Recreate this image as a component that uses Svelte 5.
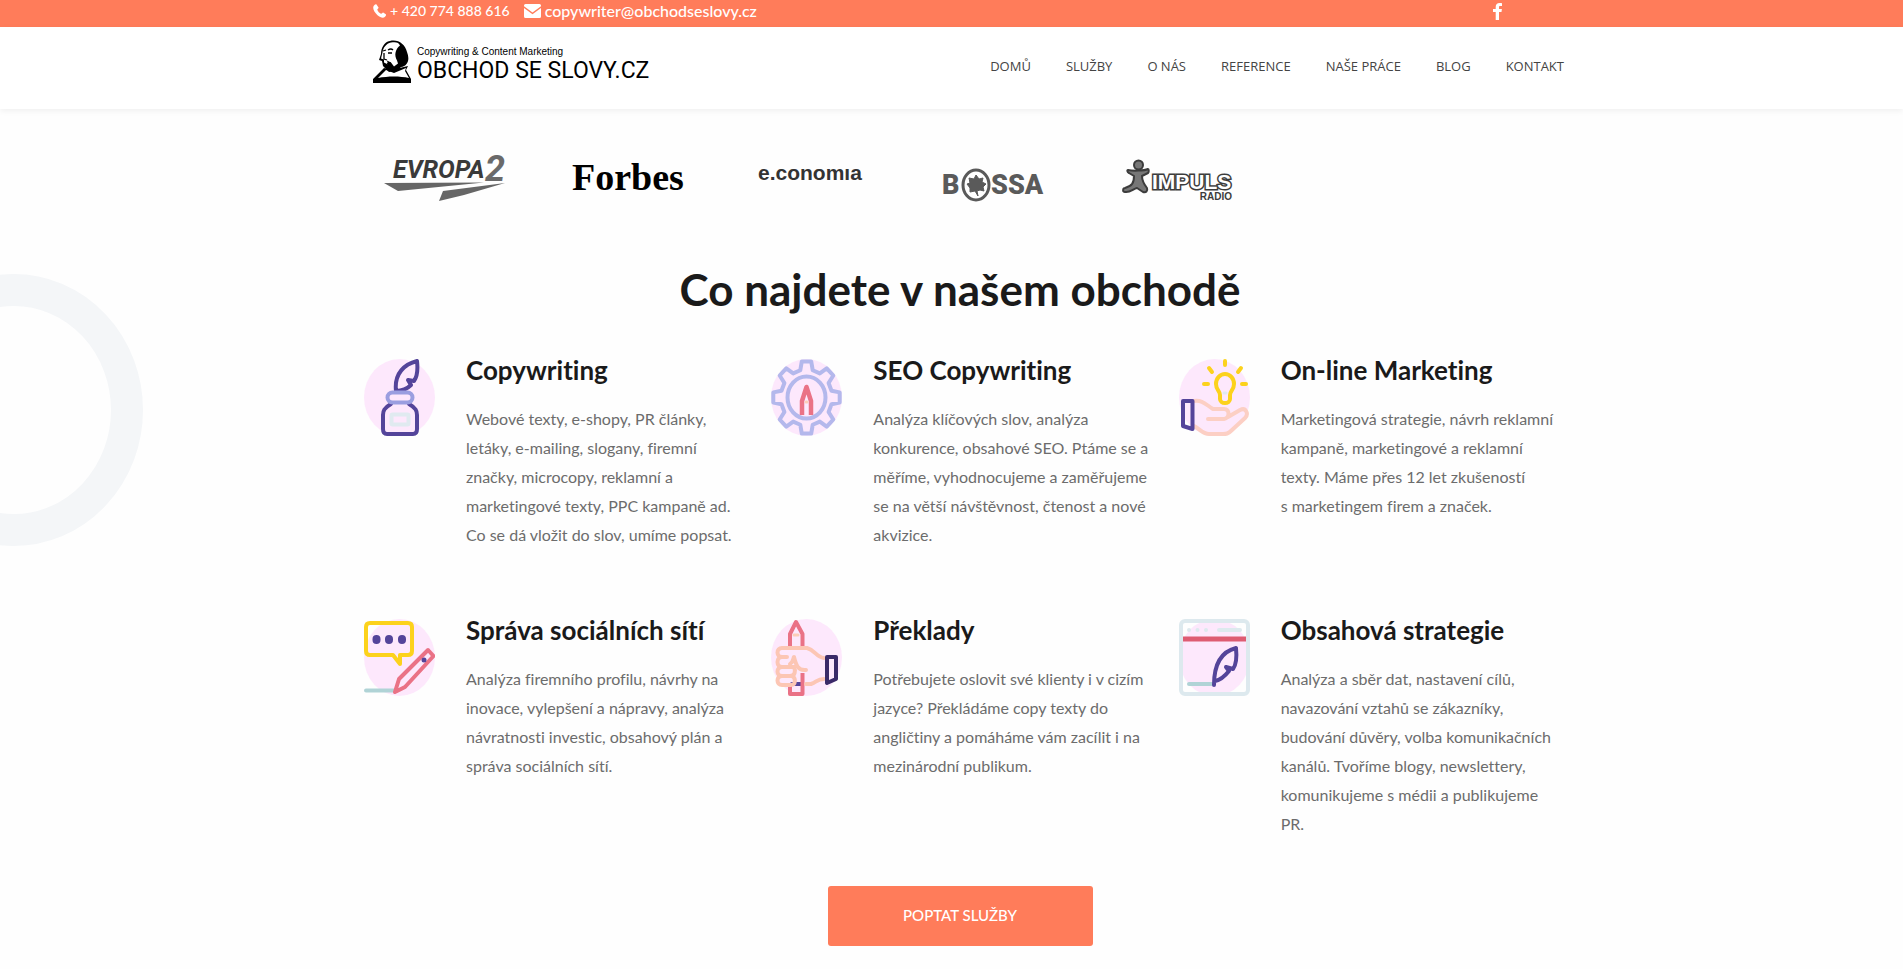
<script lang="ts">
	type IconName = 'inkwell' | 'gear' | 'idea' | 'chat' | 'fist' | 'browser';

	interface Service {
		icon: IconName;
		title: string;
		text: string;
	}

	const nav = ['Domů', 'Služby', 'O nás', 'Reference', 'Naše práce', 'Blog', 'Kontakt'];

	const services: Service[] = [
		{
			icon: 'inkwell',
			title: 'Copywriting',
			text: 'Webové texty, e-shopy, PR články,\nletáky, e-mailing, slogany, firemní\nznačky, microcopy, reklamní a\nmarketingové texty, PPC kampaně ad.\nCo se dá vložit do slov, umíme popsat.'
		},
		{
			icon: 'gear',
			title: 'SEO Copywriting',
			text: 'Analýza klíčových slov, analýza\nkonkurence, obsahové SEO. Ptáme se a\nměříme, vyhodnocujeme a zaměřujeme\nse na větší návštěvnost, čtenost a nové\nakvizice.'
		},
		{
			icon: 'idea',
			title: 'On-line Marketing',
			text: 'Marketingová strategie, návrh reklamní\nkampaně, marketingové a reklamní\ntexty. Máme přes 12 let zkušeností\ns marketingem firem a značek.'
		},
		{
			icon: 'chat',
			title: 'Správa sociálních sítí',
			text: 'Analýza firemního profilu, návrhy na\ninovace, vylepšení a nápravy, analýza\nnávratnosti investic, obsahový plán a\nspráva sociálních sítí.'
		},
		{
			icon: 'fist',
			title: 'Překlady',
			text: 'Potřebujete oslovit své klienty i v cizím\njazyce? Překládáme copy texty do\nangličtiny a pomáháme vám zacílit i na\nmezinárodní publikum.'
		},
		{
			icon: 'browser',
			title: 'Obsahová strategie',
			text: 'Analýza a sběr dat, nastavení cílů,\nnavazování vztahů se zákazníky,\nbudování důvěry, volba komunikačních\nkanálů. Tvoříme blogy, newslettery,\nkomunikujeme s médii a publikujeme\nPR.'
		}
	];

	// Eight teeth: two outer points and two root points for each
	function gearPath(cx: number, cy: number, rx: number, ry: number) {
		const points: string[] = [];
		for (let i = 0; i < 8; i++) {
			for (const [offset, r] of [[-14, 0.77], [-8, 1], [8, 1], [14, 0.77]]) {
				const a = ((i * 45 + offset) * Math.PI) / 180;
				points.push(`${(cx + rx * r * Math.sin(a)).toFixed(1)} ${(cy - ry * r * Math.cos(a)).toFixed(1)}`);
			}
		}
		return `M${points.join('L')}Z`;
	}
</script>

{#snippet serviceIcon(name: IconName)}
	<svg class="service-icon" viewBox="0 0 71 77" aria-hidden="true">
		<ellipse cx="35.5" cy="38.5" rx="35.5" ry="38.5" fill="#fde8fc" />
		<g fill="none" stroke-width="4" stroke-linecap="round" stroke-linejoin="round">
			{#if name === 'inkwell'}
				<path d="M32 32C30 14 41 5 53 2c1 9 0 16-3 20l-6-1 3 5c-4 4-8 6-15 6" stroke="#54449a" />
				<path d="M27 45c-7 4-8 7-8 11v14c0 3 1 5 4 5h26c3 0 4-2 4-5V56c0-4-1-7-8-11" stroke="#54449a" />
				<rect x="23.5" y="33.5" width="25" height="10" rx="5" stroke="#9a9ee0" />
				<rect x="27.5" y="55.5" width="17" height="10" rx="1" stroke="#e0eaf0" />
			{:else if name === 'gear'}
				<path d={gearPath(35.5, 38.5, 33.5, 36.5)} stroke="#b4b8ec" />
				<ellipse cx="35.5" cy="38.5" rx="19" ry="21" stroke="#b4b8ec" />
				<path d="M31 56V42l4.500-14L40 42v14" stroke="#ea7286" stroke-linecap="butt" stroke-width="4.500" />
				<path d="M35 43h1" stroke="#fccdb8" stroke-width="3" />
			{:else if name === 'idea'}
				<path d="M41 36c0-4-4-5-4-11a9 10 0 0 1 18 0c0 6-4 7-4 11v4a5 4 0 0 1-10 0z" stroke="#fcd21c" />
				<path d="M46 2v4M30 9l3 4M62 9l-3 4M25 25h4M63 25h4" stroke="#fcd21c" />
				<path d="M45 34h2" stroke="#e0eaf0" stroke-width="3" />
				<path d="M15 42c9-1 11 3 19 8h11c6 0 6 9 0 10H29M49 58l12-7c6-3 9 4 5 8L53 71c-4 4-6 4-9 4H30c-6 0-9-5-15-8" stroke="#fccfc4" />
				<path d="M4 42h9.500v28L4 67z" stroke="#54449a" />
			{:else if name === 'chat'}
				<path d="M6 4h38q4 0 4 4v24q0 4-4 4h-8v9l-7-9H6q-4 0-4-4V8q0-4 4-4z" stroke="#fcd21c" />
				<path d="M12.500 20v1M25 20v1M38 20v1" stroke="#54449a" stroke-width="8" />
				<path d="M2 71.500h28" stroke="#b0d3d6" />
				<path d="M64 31l5.500 6L41 68l-10 5 4-13z" stroke="#ea7286" />
				<path d="M60 41v.1" stroke="#54449a" stroke-width="5" />
			{:else if name === 'fist'}
				<path d="M21 65h9" stroke="#54449a" />
				<path d="M19 27V15l6-12 6.500 12v12M31.500 54v21H19v-8" stroke="#ea7286" stroke-linecap="butt" />
				<path d="M23 16h4" stroke="#fccdb8" stroke-width="3" />
				<g stroke="#fcc6b4">
					<path d="M12 29h24c8 2 9 9 17 10M35 65h5c6-2 6-5 13-5" />
					<path d="M19 29h-8c-6 0-6 9 0 9h5M16 38h-5c-6 0-6 10 0 10h8M23 48H11c-6 0-6 9 0 9h8c5 0 6-5 4-9" />
					<path d="M18 57h-7c-6 0-6 9 0 9h9c5 0 5-7 1-9M19 45c4-3 3-6 4-7 2 8 4 14 12 13" />
				</g>
				<path d="M56 38h9v22l-9 4z" stroke="#3a2a68" />
			{:else}
				<rect x="2" y="2" width="67" height="73" rx="4" stroke="#dde9ee" />
				<path d="M10 11v.1M18.500 11v.1M27 11v.1M40 11h21" stroke="#dde9ee" />
				<path d="M4 20h63" stroke="#de5c72" stroke-linecap="butt" stroke-width="5" />
				<path d="M10 65h24" stroke="#b0d3d6" />
				<path d="M35 66c0-20 6-33 22-37 1 10 0 17-3 21l-7-2 3 4c-4 5-8 9-14 10" stroke="#54449a" />
			{/if}
		</g>
	</svg>
{/snippet}

<div class="page">
	<div class="topbar">
		<div class="container topbar-inner">
			<a class="phone" href="tel:+420774888616">
				<svg width="13" height="14" viewBox="0 0 13 14" aria-hidden="true">
					<path d="M1 1.500C2 .5 3 0 3.500.5l2 3c.3.6-1.500 1.500-1.200 2.200C5 7.500 6.300 9 8 9.800c.7.300 1.500-1.500 2.200-1.200l2.600 1.700c.6.5 0 1.700-.8 2.500-1.500 1.500-4.500 1-7.500-1.500C1 8-1 4 1 1.500z" fill="#fff" />
				</svg>
				+ 420 774 888 616
			</a>
			<a class="mail" href="mailto:copywriter@obchodseslovy.cz">
				<svg width="17" height="14" viewBox="0 0 17 14" aria-hidden="true">
					<path d="M1.500 0h14Q17 0 17 1.500v.8L8.500 8.500 0 2.300v-.8Q0 0 1.500 0zM0 4l8.500 6.200L17 4v8.500q0 1.500-1.500 1.500h-14Q0 14 0 12.500z" fill="#fff" />
				</svg>
				copywriter@obchodseslovy.cz
			</a>
			<a class="facebook" href="#facebook" aria-label="Facebook">
				<svg width="9" height="17" viewBox="0 0 9 17" aria-hidden="true">
					<path d="M9 .2v2.700H7.300C6.200 2.900 6 3.400 6 4.200V6h2.900l-.4 3H6v8H2.700V9H0V6h2.700V3.900C2.700 1.300 4.200 0 6.500 0 7.700 0 8.600.1 9 .2z" fill="#fff" />
				</svg>
			</a>
		</div>
	</div>

	<header>
		<div class="container header-inner">
			<a class="brand" href="#domu">
				<svg width="38" height="43" viewBox="0 0 38 43" aria-hidden="true">
					<path d="M0 43v-4l11-11 7 2 17-4-2 4 5 9v4z" />
					<path d="M5 38l8-8 8 3 12-5-1 3 4 7c-9-2-21-2-31 0z" fill="#fff" />
					<path d="M17 1c8-2 15 3 17 11 3 7 1 14-6 15l-3 3-9 2-6-6-1-5-3-1 2-6C8 8 11 2 17 1z" />
					<path d="M18 2.500c5-1 8 0 9 3-5 4-6 10-3 15l1 3-4 3-3-4-4-2 1 4-4-2v-3l-3-1 1.500-6C10 8 13 3.500 18 2.500z" fill="#fff" />
					<path d="M10 11l3-1M15 10q3-2 5 0M15 13h4M11 13v6l3 1M14 24l4-1" fill="none" stroke="#000" stroke-width="1.300" />
				</svg>
				<span class="brand-text">
					<span class="tagline">Copywriting &amp; Content Marketing</span>
					<span class="brand-name">OBCHOD SE SLOVY.CZ</span>
				</span>
			</a>
			<nav>
				{#each nav as item}
					<a href="#{item}">{item}</a>
				{/each}
			</nav>
		</div>
	</header>

	<main class="container">
		<div class="logos">
			<svg viewBox="0 0 183 70" role="img" aria-label="Evropa 2">
				<text x="39" y="38" class="evropa">EVROPA</text>
				<text x="131" y="41" class="evropa-two">2</text>
				<path d="M30 43l100-.5L44 51zM151 43l-62 8-4 10 25-6z" fill="#666" />
			</svg>
			<svg viewBox="0 0 183 70" role="img" aria-label="Forbes">
				<text x="35" y="50" class="forbes">Forbes</text>
			</svg>
			<svg viewBox="0 0 183 70" role="img" aria-label="e.conomia">
				<text x="38" y="40" class="economia">e.conomıa</text>
			</svg>
			<svg viewBox="0 0 183 70" role="img" aria-label="Bossa">
				<text x="39" y="54" class="bossa">B</text>
				<text x="88" y="54" class="bossa">SSA</text>
				<ellipse cx="73" cy="45" rx="13" ry="15" fill="#fff" stroke="#5a5a5a" stroke-width="3" />
				<path d="M73 35l3 4 4-1-1 4 4 2-3 3 1 4-4-1-3 1 1 5-3-5-5 1v-4l-3-4 3-1-1-5 5 1z" fill="#5a5a5a" stroke="#5a5a5a" stroke-linejoin="round" />
			</svg>
			<svg viewBox="0 0 183 70" role="img" aria-label="Impuls Radio">
				<g fill="#777" stroke="#3c3c3c" stroke-width="2" stroke-linejoin="round">
					<path d="M42 30c4 1 16 1 20-1 1 0 1 3 0 4l-6 3c0 4 1 7 5 12 1 3-1 5-4 4l-6-4c-4 1-7 5-12 4-3 0-2-4 0-4 7-2 9-5 9-12l-5-3c-2-1-2-3-1-3z" />
					<circle cx="52.500" cy="25" r="4.500" />
				</g>
				<text x="66" y="49" class="impuls">IMPULS</text>
				<text x="146" y="60" class="radio">RADIO</text>
			</svg>
		</div>

		<h2>Co najdete v našem obchodě</h2>

		<div class="services">
			{#each services as service}
				<article>
					{@render serviceIcon(service.icon)}
					<div>
						<h3>{service.title}</h3>
						<p>{service.text}</p>
					</div>
				</article>
			{/each}
		</div>

		<button type="button">Poptat služby</button>
	</main>

	<svg class="ring" viewBox="0 0 144 274" aria-hidden="true">
		<ellipse cx="14" cy="137" rx="113" ry="120" fill="none" stroke="#f4f6f8" stroke-width="32" />
	</svg>
</div>

<style>
	:global(body) {
		background: #fefefe;
	}

	.page {
		position: relative;
		padding-bottom: 22px;
		font-family: Lato, 'Open Sans', sans-serif;
		font-size: 16px;
		font-variant-ligatures: no-common-ligatures;
	}

	a {
		color: inherit;
		text-decoration: none;
	}

	.topbar,
	header,
	main {
		padding-left: 17px;
	}

	.container {
		box-sizing: border-box;
		max-width: 1222px;
		margin: 0 auto;
	}

	.topbar {
		background: #ff7c5a;
		color: #fff;
		font-weight: 500;
	}

	.topbar-inner {
		display: flex;
		gap: 14px;
		height: 27px;
		padding: 0 69px 5px 24px;
		align-items: center;
	}

	.topbar a {
		display: flex;
		align-items: center;
		gap: 4px;
		line-height: 20px;
	}

	.phone {
		font-size: 14px;
	}

	.topbar .facebook {
		margin-left: auto;
	}

	header {
		background: #fff;
		box-shadow: 0 2px 6px rgba(0, 0, 0, 0.06);
	}

	.header-inner {
		display: flex;
		justify-content: space-between;
		height: 82px;
		padding: 13px 7px 0 24px;
	}

	.brand {
		display: flex;
		align-items: flex-start;
		gap: 6px;
		color: #000;
	}

	.brand-text {
		display: flex;
		flex-direction: column;
		padding-top: 6px;
	}

	.tagline {
		font: 10px/12px 'Liberation Sans', sans-serif;
	}

	.brand-name {
		font: 23px/26px Roboto, sans-serif;
	}

	nav {
		display: flex;
		gap: 35px;
		padding-top: 16px;
		font: 13px/20px 'Open Sans', sans-serif;
		color: #444;
		text-transform: uppercase;
	}

	main.container {
		box-sizing: content-box;
		display: flex;
		flex-direction: column;
		padding-top: 31px;
	}

	.logos {
		display: grid;
		grid-template-columns: repeat(5, minmax(0, 183px));
		padding-left: 5px;
	}

	.logos svg {
		display: block;
		width: 100%;
	}

	.evropa {
		font: italic 700 25px Roboto, sans-serif;
		fill: #3a3a3a;
	}

	.evropa-two {
		font: italic 700 36px Roboto, sans-serif;
		fill: #6a6a6a;
	}

	.forbes {
		font: 700 38px 'Liberation Serif', serif;
	}

	.economia {
		font: 700 21px 'Liberation Sans', sans-serif;
		fill: #333;
	}

	.bossa {
		font: 900 27px Roboto, sans-serif;
		fill: #5a5a5a;
	}

	.impuls {
		font: 700 21px 'Liberation Sans', sans-serif;
		fill: #fff;
		stroke: #3c3c3c;
		stroke-width: 3px;
		paint-order: stroke;
	}

	.radio {
		font: 700 10px 'Liberation Sans', sans-serif;
		fill: #3c3c3c;
		text-anchor: end;
	}

	h2 {
		margin: 53px 0 39px;
		font-size: 44px;
		font-weight: 700;
		line-height: 52px;
		text-align: center;
		color: #1a1a1a;
	}

	.services {
		display: grid;
		grid-template-columns: repeat(3, 1fr);
		row-gap: 65px;
	}

	article {
		display: flex;
		gap: 31px;
		padding-left: 15px;
	}

	.service-icon {
		flex: none;
		width: 71px;
		height: 77px;
		margin-top: 5px;
	}

	h3 {
		margin: 0 0 18px;
		font-size: 26px;
		font-weight: 700;
		line-height: 32px;
		color: #1a1a1a;
	}

	p {
		margin: 0;
		line-height: 29px;
		color: #6c6c6c;
		white-space: pre-line;
	}

	button {
		align-self: center;
		width: 265px;
		height: 60px;
		margin-top: 48px;
		padding: 0 0 2px;
		border: 0;
		border-radius: 3px;
		background: #ff7c5a;
		color: #fff;
		font: 500 15px Lato, sans-serif;
		text-transform: uppercase;
		cursor: pointer;
	}

	.ring {
		position: absolute;
		top: 273px;
		left: 0;
		width: 144px;
		height: 274px;
		z-index: -1;
	}
</style>
